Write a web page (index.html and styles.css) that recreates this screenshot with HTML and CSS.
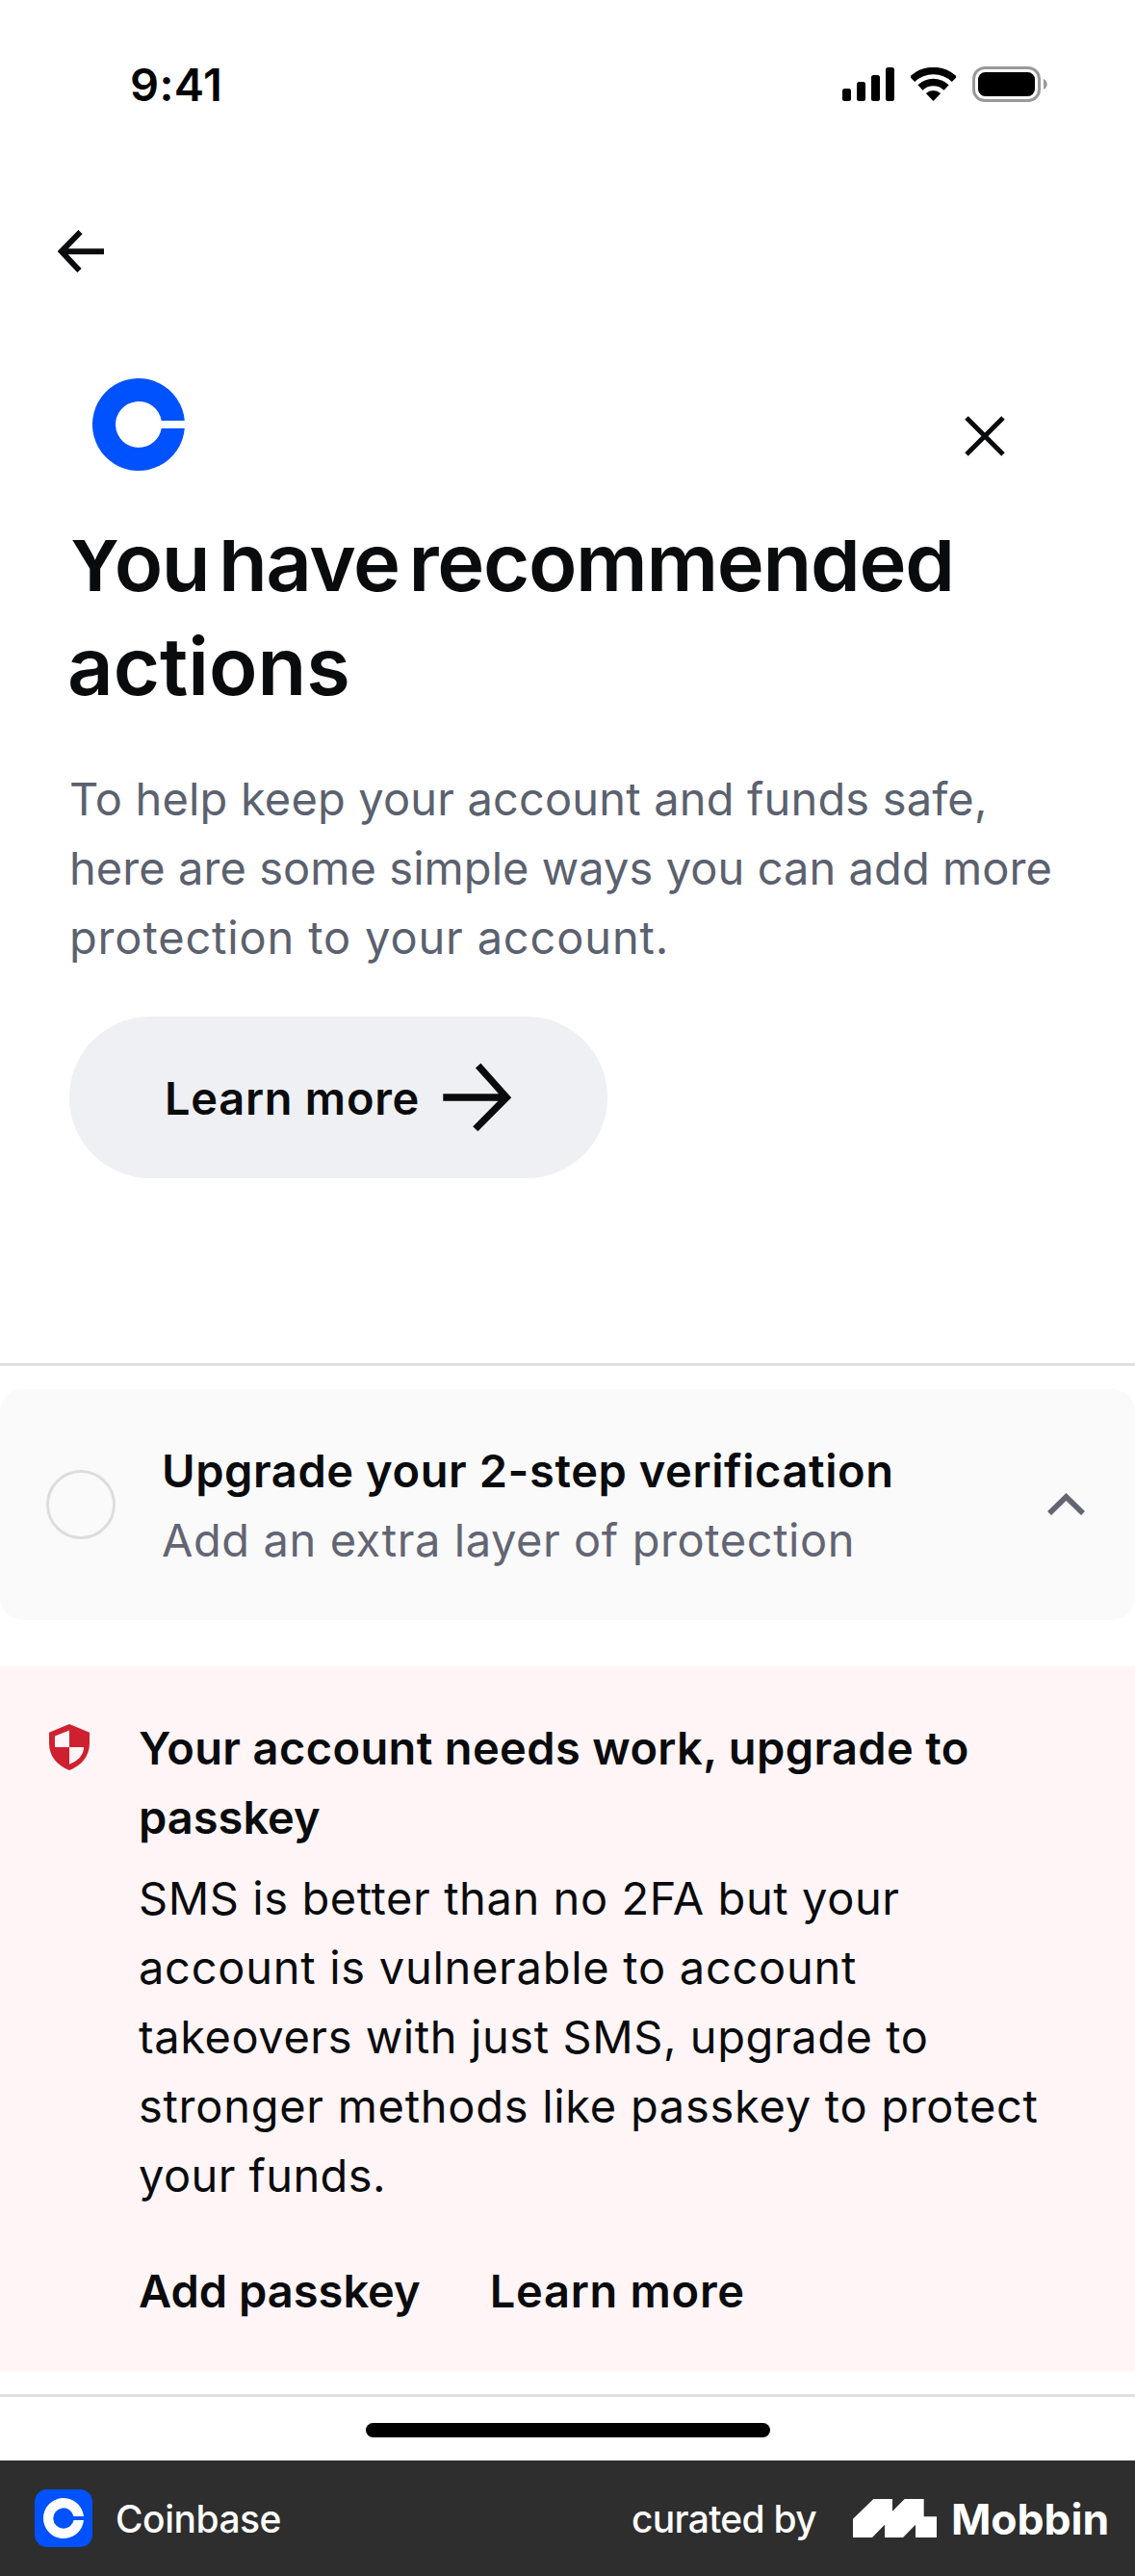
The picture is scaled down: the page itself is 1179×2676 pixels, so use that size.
FILE: index.html
```html
<!DOCTYPE html>
<html lang="en">
<head>
<meta charset="utf-8">
<title>Recommended actions</title>
<link rel="stylesheet" href="styles.css">
</head>
<body>
<div class="screen">
  <div class="status">
    <span class="time">9:41</span>
    <div class="status-icons">
      <svg class="signal" width="54" height="35" viewBox="0 0 54 35"><rect y="22" width="9" height="13" rx="2.5"/><rect x="15" y="15" width="9" height="20" rx="2.5"/><rect x="30" y="8" width="9" height="27" rx="2.5"/><rect x="45" width="9" height="35" rx="2.5"/></svg>
      <svg class="wifi" width="47" height="35" viewBox="0 0 47 35"><path d="M1.6 12.35A31.5 31.5 0 0 1 45.4 12.35M9.95 21A19.5 19.5 0 0 1 37.05 21" fill="none" stroke="#000" stroke-width="7.4"/><path d="M23.5 35L15.85 27.1A11 11 0 0 1 31.15 27.1Z"/></svg>
      <svg width="78" height="37" viewBox="0 0 78 37"><rect x="1.5" y="1.5" width="68" height="34" rx="11.5" fill="none" stroke="#999" stroke-width="3"/><rect x="6" y="6" width="59" height="25" rx="7.5"/><path d="M74 13C79 15.5 79 21.5 74 24Z" fill="#999"/></svg>
    </div>
  </div>

  <nav class="nav">
    <svg width="48" height="44" viewBox="0 0 48 44"><path d="M48 22.2H4M23.5 2L3.8 22.2L22.5 42" fill="none" stroke="#0a0b0d" stroke-width="6"/></svg>
  </nav>

  <main>
    <div class="brand">
      <svg width="96" height="96" viewBox="0 0 96 96"><path fill="#0052ff" d="M48 72a24 24 0 1 1 23.7-28H95.8A48 48 0 1 0 95.8 52H71.7A24 24 0 0 1 48 72Z"/></svg>
      <svg class="close" width="42" height="42" viewBox="0 0 42 42"><path d="M2 2L40 40M40 2L2 40" fill="none" stroke="#0a0b0d" stroke-width="5"/></svg>
    </div>

    <section class="intro">
      <h1 class="title"><span class="title-1">You have recommended</span><span class="title-2">actions</span></h1>
      <p class="lead"><span class="ls-1">To help keep your account and funds safe,</span><span class="ls-0">here are some simple ways you can add more</span><span class="ls-8">protection to your account.</span></p>
      <a class="pill"><span class="pill-label ls-7">Learn more</span>
        <svg width="72" height="72" viewBox="0 0 72 72"><path d="M.3 36H66M36.7 3L66.2 36L33.8 68.7" fill="none" stroke="#0a0b0d" stroke-width="7.3"/></svg>
      </a>
    </section>

    <hr class="rule rule-top">

    <section class="card">
      <span class="ring"></span>
      <div class="card-text">
        <strong class="ls-6">Upgrade your 2-step verification</strong>
        <span class="muted ls-6">Add an extra layer of protection</span>
      </div>
      <svg class="chevron" width="39" height="23" viewBox="0 0 39 23"><path d="M2 21L19.5 4L37 21" fill="none" stroke="#636573" stroke-width="5.8"/></svg>
    </section>

    <section class="alert">
      <svg class="shield" width="42" height="48" viewBox="0 0 42 48"><path fill="#cf202f" d="M21 0L42 8.7V20C42 34 33 43 21 48C9 43 0 34 0 20V8.7Z"/><path fill="#fff5f6" d="M21 6.5V24H6V12.5ZM21 24H36C36 32 30 38.5 21 41.7Z"/></svg>
      <div class="alert-body">
        <strong><span class="ls-3">Your account needs work, upgrade to</span><span>passkey</span></strong>
        <p class="alert-text"><span class="ls-6">SMS is better than no 2FA but your</span><span class="ls-7">account is vulnerable to account</span><span class="ls-6">takeovers with just SMS, upgrade to</span><span class="ls-7">stronger methods like passkey to protect</span><span class="ls-4">your funds.</span></p>
        <div class="links"><a>Add passkey</a><a class="ls-7">Learn more</a></div>
      </div>
    </section>

    <hr class="rule rule-bottom">
  </main>

  <div class="home"></div>

  <footer class="footer">
    <svg width="60" height="60" viewBox="0 0 60 60"><rect width="60" height="60" rx="13" fill="#0052ff"/><path fill="#fff" d="M30 40.7a10.7 10.7 0 1 1 10.5-12.6H50.9A21 21 0 1 0 50.9 32H40.5A10.7 10.7 0 0 1 30 40.7Z"/></svg>
    <span class="app">Coinbase</span>
    <span class="curated">curated by</span>
    <svg class="mobbin-mark" width="87" height="40" viewBox="0 0 261 120"><path fill="#fff" d="M0 62L64 0H123V38L161 0H221V55H261V120H195V80L156 120H99V80L60 120H0Z"/></svg>
    <span class="mobbin">Mobbin</span>
  </footer>
</div>
</body>
</html>
```
FILE: styles.css
```css
* { box-sizing: border-box; margin: 0; }
body { background: #fff; font-family: Inter, "Liberation Sans", sans-serif; font-size: 47px; line-height: 72px; color: #0a0b0d; white-space: nowrap; }
svg { display: block; flex: none; }
strong, a { font-weight: 600; }
.screen { width: 1179px; height: 2676px; overflow: hidden; display: flex; flex-direction: column; }

.status { display: flex; align-items: center; justify-content: space-between; padding: 59px 91px 0 135px; }
.time { font-weight: 600; line-height: 57px; letter-spacing: .38px; color: #000; }
.status-icons { display: flex; align-items: center; }
.wifi { margin: 0 17px; }

.nav { padding: 123px 60px 0; }

.brand { display: flex; justify-content: space-between; align-items: flex-end; margin-top: 110px; padding: 0 135px 0 96px; }
.close { margin-bottom: 15px; }

.intro { padding: 41px 72px 0; }
.title { font-size: 83px; line-height: 108px; font-weight: 600; clip-path: inset(31px 0 0 -4px); }
.title span, .lead span, .alert-body strong span, .alert-text span { display: block; }
.title-1 { margin-left: -3px; letter-spacing: -1.35px; word-spacing: -10px; }
.title-2 { margin-left: -2px; }
.lead { margin-top: 48px; color: #5b616e; }
.pill { display: flex; align-items: center; justify-content: space-between; width: 559px; height: 168px; margin-top: 46px; padding: 0 99px; border-radius: 84px; background: #eef0f3; }
.pill-label { padding-top: 2px; }

.rule { height: 3px; border: 0; background: #e0e0e0; }
.rule-top { margin-top: 192px; }
.rule-bottom { margin-top: 24px; }

.card { display: flex; align-items: center; height: 240px; margin-top: 24px; padding: 0 52px 0 48px; border-radius: 24px; background: #fafafa; }
.ring { width: 72px; height: 72px; border: 3px solid #dcdede; border-radius: 50%; }
.card-text { display: flex; flex-direction: column; flex: 1; margin-left: 48px; padding-top: 2px; }
.muted { color: #636573; }
.chevron { margin-bottom: 2px; }

.alert { display: flex; margin-top: 48px; padding: 49px 51px 47px; background: #fff5f6; }
.shield { margin-top: 11px; }
.alert-body { margin-left: 51px; }
.alert-text { margin-top: 12px; }
.links { display: flex; gap: 72px; margin-top: 48px; }

.home { width: 420px; height: 15px; margin: 27px auto 0; border-radius: 8px; background: #000; }

.footer { display: flex; align-items: center; height: 120px; margin-top: 24px; padding: 0 27px 0 36px; background: #2e2e2e; color: #fff; font-size: 39px; font-weight: 500; }
.app, .curated, .mobbin { padding-top: 2px; }
.app { margin-left: 24px; letter-spacing: -.5px; }
.curated { margin-left: auto; letter-spacing: -.72px; }
.mobbin-mark { margin-left: 38px; }
.mobbin { margin-left: 15px; font-size: 44.5px; font-weight: 700; letter-spacing: -.1px; }

.ls-0 { letter-spacing: .06px; }
.ls-1 { letter-spacing: .16px; }
.ls-3 { letter-spacing: .36px; }
.ls-4 { letter-spacing: .41px; }
.ls-6 { letter-spacing: .58px; }
.ls-7 { letter-spacing: .72px; }
.ls-8 { letter-spacing: .84px; }
```
